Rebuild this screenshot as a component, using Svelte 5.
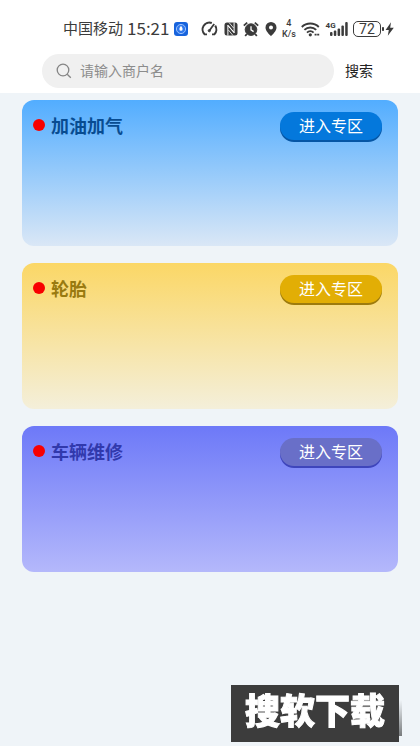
<script>
    let keyword = $state("")

    const zones = [
        { name: "加油加气", theme: "blue" },
        { name: "轮胎", theme: "yellow" },
        { name: "车辆维修", theme: "purple" },
    ]
</script>

<div class="page">
    <header>
        <div class="status">
            <span class="carrier">中国移动</span>
            <span class="time">15:21</span>
            <svg width="14" height="14" viewBox="0 0 14 14">
                <rect width="14" height="14" rx="3" fill="#1763dc" />
                <circle cx="7" cy="7" r="4.6" fill="#2f78ec" stroke="#a9cbff" stroke-width=".9" />
                <path d="M7 3.8c.9 1.3 1.6 2.2 1.6 3.4a1.6 1.6 0 0 1-3.2 0c0-1.2.7-2.1 1.6-3.4z" fill="#fff" />
            </svg>

            <div class="icons">
                <!-- speed -->
                <svg width="17" height="16" viewBox="0 0 17 16" fill="none" stroke="#3b3b3b" stroke-width="2">
                    <path d="M3.6 13.2A6.8 6.8 0 0 1 10.8 2" />
                    <path d="M14.2 4.6a6.8 6.8 0 0 1-.8 8.6" />
                    <path d="M3 13.4h3M11 13.4h3" stroke-width="1.6" />
                    <path d="M13.2 3 8.6 9.2" stroke-width="1.8" />
                    <circle cx="8.3" cy="9.7" r="1.1" fill="#3b3b3b" stroke-width="1" />
                </svg>
                <!-- nfc -->
                <svg width="14" height="16" viewBox="0 0 14 16">
                    <rect x=".5" y="1.5" width="13" height="13" rx="2.5" fill="#3b3b3b" />
                    <path d="M3.9 14.6V4.2l6.200 7.200M10.100 1.400v10.400L3.900 4.600" fill="none" stroke="#fff" stroke-width="1" />
                    <path d="M5 1.500 9.600 7M9 14.500 4.400 9" fill="none" stroke="#fff" stroke-width=".8" />
                </svg>
                <!-- alarm -->
                <svg width="16" height="16" viewBox="0 0 16 16" fill="none" stroke="#3b3b3b">
                    <circle cx="8" cy="8.6" r="5.8" fill="#3b3b3b" />
                    <path d="M.8 4.6 4.2 1.6M15.2 4.6l-3.4-3M3.8 13l-1.6 2M12.2 13l1.6 2" stroke-width="1.8" />
                    <path d="M8 5.2v3.6l2.6 1.8" stroke="#fff" stroke-width="1.3" />
                </svg>
                <!-- location -->
                <svg width="12" height="16" viewBox="0 0 12 16">
                    <path d="M6 1A5.5 5.5 0 0 0 .5 6.5C.5 10 4 13 6 15.2 8 13 11.5 10 11.5 6.5A5.5 5.5 0 0 0 6 1zM6 4.5a2 2 0 1 1 0 4 2 2 0 0 1 0-4z" fill="#3b3b3b" />
                </svg>
                <span class="rate"><span>4</span><span>K/s</span></span>
                <!-- wifi -->
                <svg width="19" height="16" viewBox="0 0 19 16" fill="none" stroke="#3b3b3b" stroke-width="1.9">
                    <path d="M.8 6a12.2 12.2 0 0 1 17 0M3.4 8.9a8.5 8.5 0 0 1 11.8 0M6 11.6a4.8 4.8 0 0 1 6.6 0" />
                    <circle cx="9.3" cy="13.8" r="1.6" fill="#3b3b3b" stroke="none" />
                    <path d="M13.6 13.6h4.6" stroke-dasharray="2 .6" />
                </svg>
                <span class="signal">
                    <span class="net">4G</span>
                    <svg width="18" height="14" viewBox="0 0 18 14" fill="#3b3b3b">
                        <rect x="0" y="10" width="2.5" height="4" rx="1" />
                        <rect x="3.8" y="8.5" width="2.5" height="5.5" rx="1" />
                        <rect x="7.6" y="6.5" width="2.5" height="7.5" rx="1" />
                        <rect x="11.4" y="3.5" width="2.5" height="10.5" rx="1" />
                        <rect x="15.2" y="0" width="2.5" height="14" rx="1" />
                    </svg>
                </span>
                <span class="power">
                    <span class="battery">72</span>
                    <svg width="12" height="14" viewBox="0 0 12 14" fill="#3b3b3b">
                        <rect x="0" y="5" width="2" height="4" rx=".8" />
                        <path d="M9 .2 3.6 8h3.2L5.8 13.8 11.8 5.8H8.2z" />
                    </svg>
                </span>
            </div>
        </div>

        <form class="search" onsubmit={(e) => e.preventDefault()}>
            <label class="box">
                <svg width="16" height="16" viewBox="0 0 16 16" fill="none" stroke="#858585" stroke-width="1.3">
                    <circle cx="7" cy="7" r="5.8" />
                    <path d="m11.2 11.2 3.6 3.6" />
                </svg>
                <input type="text" placeholder="请输入商户名" aria-label="请输入商户名" bind:value={keyword} />
            </label>
            <button class="go">搜索</button>
        </form>
    </header>

    <main>
        {#each zones as zone}
            <section class="card {zone.theme}">
                <h2>{zone.name}</h2>
                <button class="enter">进入专区</button>
            </section>
        {/each}
    </main>

    <div class="watermark">搜软下载</div>
</div>

<style>
    :global(body) {
        background: #eff4f8;
    }

    .page {
        min-height: 100vh;
        font-family: "Noto Sans CJK SC", sans-serif;
        color: #333;
    }

    button {
        border: none;
        font-family: inherit;
        cursor: pointer;
    }

    header {
        background: #fff;
        padding-top: 16px;
        padding-bottom: 5px;
    }

    .status {
        display: flex;
        align-items: center;
        height: 26px;
        padding: 0 26px 0 63px;
        color: #3b3b3b;
        white-space: nowrap;
    }

    .carrier,
    .time {
        padding-bottom: 3px;
        line-height: 24px;
    }

    .carrier {
        font-size: 15px;
    }

    .time {
        margin: 0 5px 0 4px;
        font-size: 17px;
    }

    .icons {
        display: flex;
        flex: 1;
        align-items: center;
        justify-content: space-between;
        margin-left: 13px;
    }

    svg {
        display: block;
        flex: none;
    }

    .rate {
        display: flex;
        flex-direction: column;
        align-items: center;
        font-family: Roboto, sans-serif;
        font-size: 9px;
        font-weight: 500;
        line-height: 11px;
    }

    .signal {
        position: relative;
        padding-left: 4px;
    }

    .net {
        position: absolute;
        left: 0;
        top: -1px;
        font-family: Roboto, sans-serif;
        font-size: 8px;
        font-weight: 700;
        line-height: 9px;
    }

    .power {
        display: flex;
        align-items: center;
        gap: 1px;
    }

    .battery {
        box-sizing: border-box;
        width: 28px;
        height: 16px;
        border: 1px solid #3b3b3b;
        border-radius: 5px;
        font-family: Roboto, sans-serif;
        font-size: 14px;
        line-height: 14px;
        text-align: center;
    }

    .search {
        display: flex;
        align-items: center;
        margin-top: 12px;
        padding: 0 47px 0 42px;
    }

    .box {
        display: flex;
        flex: 1;
        align-items: center;
        box-sizing: border-box;
        gap: 8px;
        height: 34px;
        padding: 0 14px;
        border-radius: 17px;
        background: #f0f0f0;
    }

    .box input {
        flex: 1;
        min-width: 0;
        padding: 0 0 2px;
        border: none;
        outline: none;
        background: none;
        font-family: inherit;
        font-size: 14px;
        color: #333;
    }

    .box input::placeholder {
        color: #8c8c8c;
        opacity: 1;
    }

    .go {
        margin-left: 11px;
        padding: 0 0 2px;
        background: none;
        font-size: 14px;
        color: #222;
    }

    main {
        display: flex;
        flex-direction: column;
        gap: 17px;
        padding: 7px 22px 24px;
    }

    .card {
        display: flex;
        align-items: flex-start;
        justify-content: space-between;
        box-sizing: border-box;
        min-height: 146px;
        padding: 12px 16px 12px 11px;
        border-radius: 12px;
    }

    h2 {
        display: flex;
        align-items: center;
        gap: 6px;
        margin: 0;
        font-size: 18px;
        font-weight: 700;
        line-height: 26px;
    }

    h2::before {
        content: "";
        width: 12px;
        height: 12px;
        border-radius: 50%;
        background: #f80000;
    }

    .enter {
        height: 28px;
        padding: 0 19px 2px;
        border-radius: 15px;
        font-size: 16px;
        line-height: 26px;
        color: #fff;
    }

    .blue {
        background: linear-gradient(#52adff, #dae7f6);
    }

    .blue h2 {
        color: #084c91;
    }

    .blue .enter {
        background: #0478dc;
        box-shadow: 0 2px 0 #0656a5;
    }

    .yellow {
        background: linear-gradient(#fbd766, #f4efda);
    }

    .yellow h2 {
        color: #997a10;
    }

    .yellow .enter {
        background: #e2ae05;
        box-shadow: 0 2px 0 #9d7b0d;
    }

    .purple {
        background: linear-gradient(#6d79f8, #b4b8fb);
    }

    .purple h2 {
        color: #3139ac;
    }

    .purple .enter {
        background: #696fc8;
        box-shadow: 0 2px 0 #3e45bc;
    }

    .watermark {
        position: fixed;
        right: 21px;
        bottom: 4px;
        padding: 0 14px 10px;
        background: #3c3c3c;
        font-size: 35px;
        font-weight: 900;
        line-height: 47px;
        color: #fff;
        -webkit-text-stroke: 1px #fff;
    }

    .watermark::after {
        content: "";
        position: absolute;
        top: 15px;
        bottom: 6px;
        left: 100%;
        width: 3px;
        background: linear-gradient(#eff4f8, #777a7c);
    }
</style>
